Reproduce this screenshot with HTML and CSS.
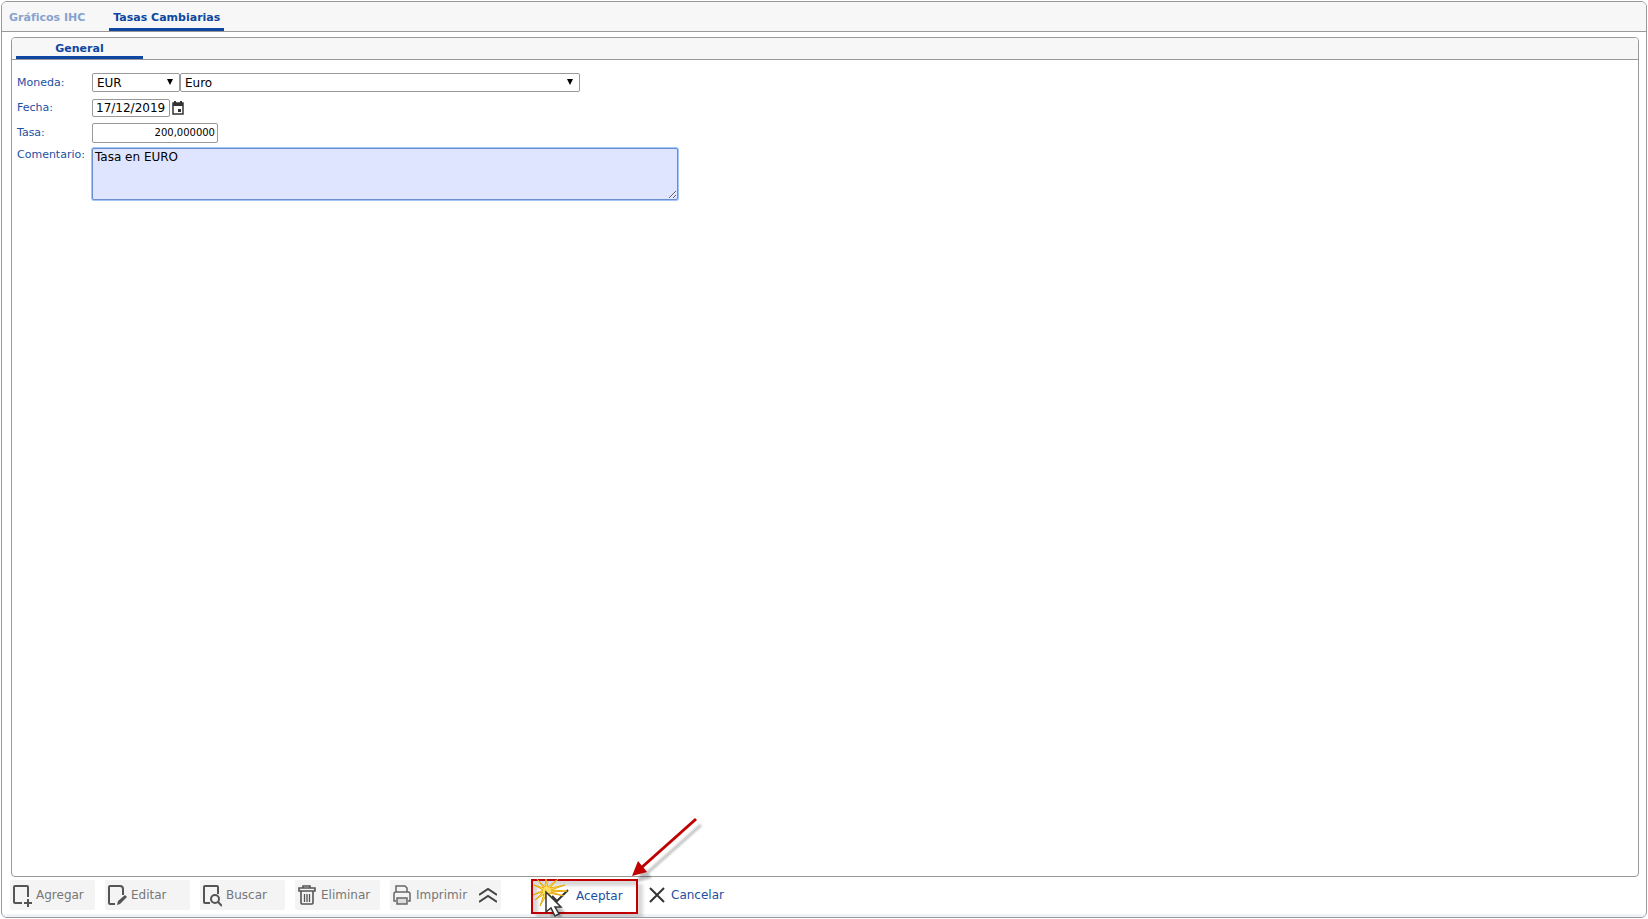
FILE: index.html
```
<!DOCTYPE html>
<html lang="es">
<head>
    <meta charset="UTF-8">
    <meta name="viewport" content="width=device-width, initial-scale=1.0">
    <title>Tasas Cambiarias</title>
    <link rel="stylesheet" href="styles.css">
</head>
<body>
    <div class="window">
        <nav class="tabs">
            <a href="#graficos" class="tab">Gráficos IHC</a>
            <a href="#tasas" class="tab active">Tasas Cambiarias</a>
        </nav>

        <main class="panel">
            <div class="panel-tabs">
                <a href="#general" class="panel-tab">General</a>
            </div>
            <form class="form" id="tasa-form">
                <div class="row">
                    <label for="moneda">Moneda:</label>
                    <div class="select select-code">
                        <select id="moneda"><option>EUR</option></select>
                    </div>
                    <div class="select select-name">
                        <select id="moneda-nombre" aria-label="Nombre de la moneda"><option>Euro</option></select>
                    </div>
                </div>
                <div class="row">
                    <label for="fecha">Fecha:</label>
                    <input type="text" id="fecha" class="date" value="17/12/2019">
                    <button type="button" class="calendar" aria-label="Calendario">
                        <svg width="12" height="14" viewBox="0 0 12 14">
                            <path d="M1 2h10v11H1z" fill="none" stroke="#333" stroke-width="1.5"/>
                            <path d="M1 2h10v3H1zM2 0h2v2H2zM8 0h2v2H8zM6 8h3v3H6z" fill="#333"/>
                        </svg>
                    </button>
                </div>
                <div class="row">
                    <label for="tasa">Tasa:</label>
                    <input type="text" id="tasa" class="rate" value="200,000000">
                </div>
                <div class="row row-top">
                    <label for="comentario">Comentario:</label>
                    <textarea id="comentario">Tasa en EURO</textarea>
                </div>
            </form>
        </main>

        <footer class="toolbar">
            <button type="button" class="tool" disabled>
                <svg width="20" height="24" viewBox="0 0 20 24">
                    <path d="M10 20H3q-1 0-1-1V4q0-1 1-1h12q1 0 1 1v10M16 16v8M12 20h8" fill="none" stroke="#555" stroke-width="2"/>
                </svg>
                Agregar
            </button>
            <button type="button" class="tool" disabled>
                <svg width="20" height="24" viewBox="0 0 20 24">
                    <path d="M8 21H3q-1 0-1-1V4q0-1 1-1h10q3 0 3 3v6" fill="none" stroke="#555" stroke-width="2"/>
                    <path d="M10 22l1-4 7-6 2 2-7 7z" fill="#555"/>
                </svg>
                Editar
            </button>
            <button type="button" class="tool" disabled>
                <svg width="20" height="24" viewBox="0 0 20 24">
                    <path d="M8 20H3q-1 0-1-1V4q0-1 1-1h12q1 0 1 1v7M16 19l4 4" fill="none" stroke="#555" stroke-width="2"/>
                    <circle cx="13" cy="16" r="4" fill="none" stroke="#555" stroke-width="2"/>
                </svg>
                Buscar
            </button>
            <button type="button" class="tool" disabled>
                <svg width="20" height="24" viewBox="0 0 20 24">
                    <g fill="none" stroke="#555">
                        <path d="M2 5h16v3H2zM6 5V3h7v2M4 8v12q0 1 1 1h10q1 0 1-1V8" stroke-width="1.6"/>
                        <path d="M7.5 11v8M10 11v8M12.5 11v8" stroke-width="1.3"/>
                    </g>
                </svg>
                Eliminar
            </button>
            <div class="print">
                <button type="button" class="tool tool-print" disabled>
                    <svg width="20" height="24" viewBox="0 0 20 24">
                        <g fill="none" stroke="#666" stroke-width="1.5">
                            <path d="M4 9V3h9l2 2v4M4 18H2v-7q0-2 2-2h12q2 0 2 2v7h-2"/>
                            <path d="M5 15h10v6H5z" fill="#ddd"/>
                        </g>
                    </svg>
                    Imprimir
                </button>
                <button type="button" class="more" aria-label="Más opciones" disabled>
                    <svg width="18" height="16" viewBox="0 0 18 16">
                        <path d="M0 8l9-6 9 6M0 15l9-6 9 6" fill="none" stroke="#444" stroke-width="2"/>
                    </svg>
                </button>
            </div>

            <div class="highlight">
                <button type="submit" form="tasa-form" class="action">
                    <svg width="20" height="20" viewBox="0 0 20 20">
                        <path d="M2 10l5 5L18 4" fill="none" stroke="#333" stroke-width="2"/>
                    </svg>
                    Aceptar
                </button>
                <svg class="pointer" width="180" height="106" viewBox="0 0 180 106">
                    <defs>
                        <filter id="soft"><feGaussianBlur stdDeviation="1"/></filter>
                    </defs>
                    <!-- shadows -->
                    <g opacity="0.25" filter="url(#soft)" transform="translate(5 6)">
                        <path d="M165 7L110 56" stroke="#000" stroke-width="3"/>
                        <path d="M101 64l6-15 9 11zM15 80v20l5-4 4 8 4-2-4-7h6z"/>
                    </g>
                    <!-- arrow -->
                    <path d="M165 7L110 56" stroke="#c00000" stroke-width="3"/>
                    <path d="M101 64l6-15 9 11z" fill="#c00000"/>
                    <!-- click burst -->
                    <path d="M6 67L14 75L15 67L17 75L27 67L19 76L34 73L20 78L36 79L20 80L33 84L18 81L22 88L16 82L9 94L13 82L4 88L12 80L2 83L12 78L3 73L13 76Z" fill="#ffdf5e" stroke="#e8ac10" stroke-width="1"/>
                    <!-- cursor -->
                    <path d="M15 80v20l5-4 4 8 4-2-4-7h6z" fill="#fff" stroke="#333" stroke-width="1.5"/>
                </svg>
            </div>

            <button type="button" class="action">
                <svg width="16" height="16" viewBox="0 0 16 16">
                    <path d="M1 1l14 14M15 1L1 15" fill="none" stroke="#333" stroke-width="2"/>
                </svg>
                Cancelar
            </button>
        </footer>
    </div>
</body>
</html>
```

FILE: styles.css
```
* {
    box-sizing: border-box;
}
body {
    margin: 0;
    padding: 1px;
    min-height: 100vh;
    display: flex;
    font-family: "DejaVu Sans", Verdana, sans-serif;
    font-size: 12px;
    line-height: 14px;
    background: #fff;
}
button, input, select, textarea {
    font: inherit;
    margin: 0;
}
button {
    display: flex;
    align-items: center;
    border: none;
    background: none;
    padding: 0;
}
svg {
    display: block;
    flex: none;
}
a {
    text-decoration: none;
}
.window {
    flex: 1;
    display: flex;
    flex-direction: column;
    border: 1px solid #999;
    border-radius: 6px;
    overflow: hidden;
}

/* Tabs */
.tabs {
    display: flex;
    gap: 20px;
    height: 30px;
    padding-left: 3px;
    background: #f7f7f7;
    border-bottom: 1px solid #999;
}
.tab {
    padding: 9px 4px 0;
    border-bottom: 3px solid transparent;
    font-size: 11px;
    font-weight: bold;
    color: #86a2d0;
}
.tab.active {
    color: #0d47a1;
    border-bottom-color: #0d47a1;
}
.panel {
    flex: 1;
    margin: 5px 7px 0 9px;
    border: 1px solid #999;
    border-radius: 4px;
    overflow: hidden;
}
.panel-tabs {
    height: 22px;
    padding-left: 4px;
    display: flex;
    background: #f7f7f7;
    border-bottom: 1px solid #999;
}
.panel-tab {
    width: 127px;
    padding-top: 4px;
    border-bottom: 3px solid #0d47a1;
    font-size: 11px;
    font-weight: bold;
    text-align: center;
    color: #0d47a1;
}

/* Form */
.form {
    padding: 10px 5px;
}
.row {
    display: flex;
    align-items: center;
    min-height: 25px;
}
.row-top {
    align-items: flex-start;
    padding-top: 3px;
}
label {
    width: 75px;
    font-size: 11px;
    color: #1c4fa3;
}
input, select, textarea {
    border: 1px solid #999;
    border-radius: 2px;
    background: #fff;
    color: #000;
}
.select {
    position: relative;
}
.select::after {
    content: "";
    position: absolute;
    top: 6px;
    right: 7px;
    border: 3px solid transparent;
    border-top: 6px solid #000;
    border-bottom: none;
    pointer-events: none;
}
.select select {
    display: block;
    width: 100%;
    height: 19px;
    padding: 0 4px;
    appearance: none;
}
.select-code {
    width: 88px;
}
.select-name {
    width: 400px;
}
.date {
    width: 78px;
    height: 18px;
    padding: 0 3px;
}
.calendar {
    margin-left: 2px;
}
.rate {
    width: 126px;
    height: 20px;
    padding: 0 2px;
    font-size: 10px;
    text-align: right;
}
textarea {
    width: 586px;
    height: 52px;
    padding: 1px 2px;
    background: #e0e5ff;
    border-color: #6a8fd0;
    box-shadow: 0 0 0 1px #a3c5f7;
}

/* Toolbar */
.toolbar {
    display: flex;
    align-items: flex-start;
    height: 40px;
    padding: 2px 8px 0;
    border-bottom: 3px solid #f0f3f7;
}
.tool {
    width: 85px;
    height: 30px;
    margin: 1px 10px 0 0;
    padding-left: 2px;
    gap: 4px;
    border-radius: 2px;
    background: #f4f4f4;
    color: #777;
}
.print {
    display: flex;
}
.tool-print {
    margin-right: 0;
}
.more {
    width: 26px;
    height: 30px;
    margin-top: 1px;
    padding-left: 4px;
    border-radius: 2px;
    background: #f4f4f4;
}
.action {
    height: 30px;
    gap: 6px;
    color: #1c4fa3;
}
.highlight {
    position: relative;
    width: 107px;
    height: 35px;
    margin: 0 11px 0 30px;
    padding-left: 17px;
    border: 2px solid #c00000;
    box-shadow: 5px 5px 3px rgba(0, 0, 0, 0.15), inset 5px 5px 3px rgba(0, 0, 0, 0.15);
}
.highlight + .action {
    margin-top: 1px;
}
.pointer {
    position: absolute;
    left: -2px;
    top: -69px;
    pointer-events: none;
}
```
